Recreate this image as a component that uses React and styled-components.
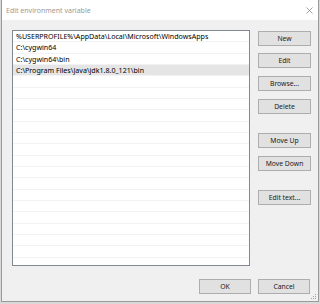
import React from 'react';
import styled, { createGlobalStyle } from 'styled-components';

const GlobalStyle = createGlobalStyle`
  html, body {
    margin: 0;
    padding: 0;
    background: #d9d9d9;
    font-family: 'Noto Sans', 'Open Sans', sans-serif;
  }
`;

const Window = styled.div`
  position: relative;
  box-sizing: border-box;
  width: 318px;
  height: 302px;
  margin-left: 1px;
  border: 1px solid #9a9a9a;
  border-top: none;
  background: #f0f0f0;
  display: flex;
  flex-direction: column;
`;

const TitleBar = styled.div`
  height: 20px;
  background: #fff;
  display: flex;
  align-items: center;
  justify-content: space-between;
  padding: 0 5px 0 4px;
  font-size: 7px;
  color: #9a9a9a;
`;

const Body = styled.div`
  flex: 1;
  display: flex;
  flex-direction: column;
  padding: 10px 7px 0 10px;
`;

const Main = styled.div`
  display: flex;
  gap: 8px;
`;

const List = styled.div`
  box-sizing: border-box;
  width: 238px;
  height: 236px;
  border: 1px solid #828790;
  background: #fff;
  overflow: hidden;
`;

const Row = styled.div`
  box-sizing: border-box;
  height: 11.33px;
  line-height: 11px;
  padding-left: 3px;
  font-size: 7.1px;
  color: #000;
  white-space: nowrap;
  border-bottom: 1px solid #f2f2f2;
  background: ${(p) => (p.selected ? '#e5e5e5' : '#fff')};
`;

const Side = styled.div`
  display: flex;
  flex-direction: column;
  padding-top: 1px;
`;

const Button = styled.button`
  box-sizing: border-box;
  width: ${(p) => p.w || 53}px;
  height: 15px;
  margin-top: ${(p) => p.gap || 0}px;
  padding: 0;
  border: 1px solid #adadad;
  background: #e1e1e1;
  color: #1a1a1a;
  font-family: 'Noto Sans', 'Open Sans', sans-serif;
  font-size: 6.8px;
  line-height: 13px;
`;

const Footer = styled.div`
  display: flex;
  justify-content: flex-end;
  gap: 7px;
  margin-top: 13px;
  padding-right: 1px;
`;

const Grip = styled.svg`
  position: absolute;
  right: 1px;
  bottom: 1px;
`;

const paths = [
  '%USERPROFILE%\\AppData\\Local\\Microsoft\\WindowsApps',
  'C:\\cygwin64',
  'C:\\cygwin64\\bin',
  'C:\\Program Files\\Java\\jdk1.8.0_121\\bin',
];

const side = [
  ['New', 0],
  ['Edit', 7],
  ['Browse...', 8],
  ['Delete', 8],
  ['Move Up', 19],
  ['Move Down', 8],
  ['Edit text...', 19],
];

export default function App() {
  const rows = [...paths, ...Array(17).fill('')];
  return (
    <>
      <GlobalStyle />
      <Window>
        <TitleBar>
          <span>Edit environment variable</span>
          <svg width="7" height="7" viewBox="0 0 7 7">
            <path d="M0.5 0.5 L6.5 6.5 M6.5 0.5 L0.5 6.5" stroke="#8a8a8a" strokeWidth="0.8" />
          </svg>
        </TitleBar>
        <Body>
          <Main>
            <List>
              {rows.map((r, i) => (
                <Row key={i} selected={i === 3}>{r}</Row>
              ))}
            </List>
            <Side>
              {side.map(([label, gap]) => (
                <Button key={label} gap={gap}>{label}</Button>
              ))}
            </Side>
          </Main>
          <Footer>
            <Button w={52}>OK</Button>
            <Button w={52}>Cancel</Button>
          </Footer>
        </Body>
        <Grip width="6" height="6" viewBox="0 0 6 6">
          <rect x="4" y="0" width="1" height="1" fill="#a0a0a0" />
          <rect x="2" y="2" width="1" height="1" fill="#a0a0a0" />
          <rect x="4" y="2" width="1" height="1" fill="#a0a0a0" />
          <rect x="0" y="4" width="1" height="1" fill="#a0a0a0" />
          <rect x="2" y="4" width="1" height="1" fill="#a0a0a0" />
          <rect x="4" y="4" width="1" height="1" fill="#a0a0a0" />
        </Grip>
      </Window>
    </>
  );
}
